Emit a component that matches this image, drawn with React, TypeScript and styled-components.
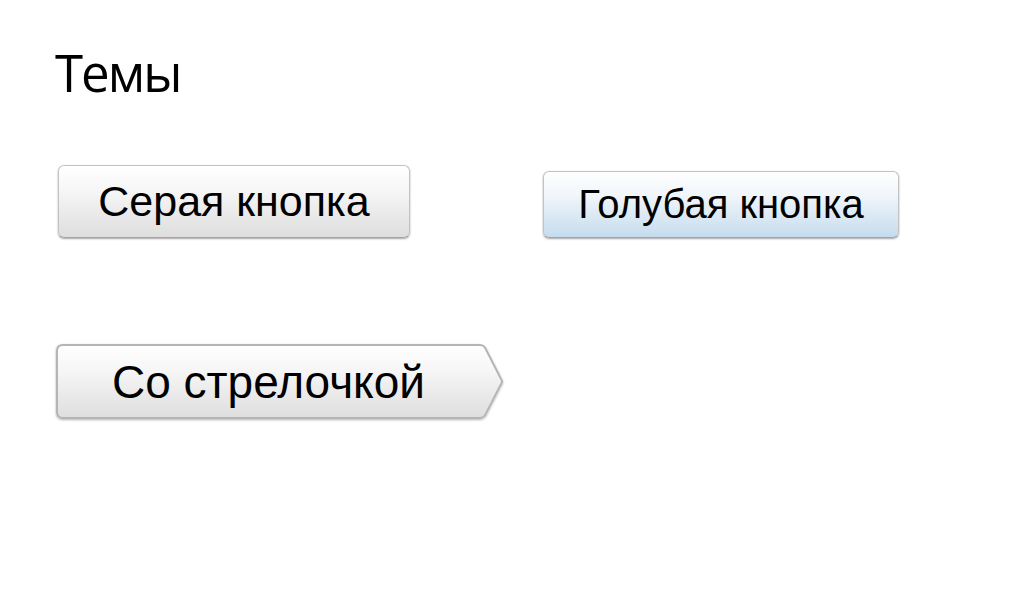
import React from "react";
import styled, { createGlobalStyle } from "styled-components";

const GlobalStyle = createGlobalStyle`
  html, body {
    margin: 0;
    padding: 0;
    background: #ffffff;
  }
`;

const Page = styled.div`
  width: 1024px;
  height: 603px;
  box-sizing: border-box;
  padding: 47px 0 0 55px;
  display: flex;
  flex-direction: column;
  align-items: flex-start;
`;

const Title = styled.h1`
  margin: 0;
  font-family: "Open Sans", "Noto Sans", sans-serif;
  font-weight: 400;
  font-size: 51px;
  letter-spacing: -2px;
  line-height: 1;
  color: #000;
`;

const Row = styled.div`
  margin-top: 67px;
  padding-left: 3px;
  display: flex;
  align-items: flex-end;
  gap: 133px;
`;

const Button = styled.button<{ $tone: "gray" | "blue"; $w: number; $h: number; $size: number }>`
  width: ${(p) => p.$w}px;
  height: ${(p) => p.$h}px;
  box-sizing: border-box;
  padding: 0;
  border: 1px solid #c2c2c2;
  border-bottom-color: #a4a4a4;
  border-radius: 6px;
  background: ${(p) =>
    p.$tone === "gray"
      ? "linear-gradient(180deg, #ffffff 0%, #f6f6f6 35%, #dedede 100%)"
      : "linear-gradient(180deg, #ffffff 0%, #f1f6fa 35%, #c5dcee 100%)"};
  box-shadow: 0 1px 2px rgba(0, 0, 0, 0.35);
  font-family: "Liberation Sans", Arial, sans-serif;
  font-size: ${(p) => p.$size}px;
  color: #000;
  display: flex;
  align-items: center;
  justify-content: center;
  cursor: pointer;
`;

const ArrowButton = styled.button`
  margin-top: 106px;
  margin-left: 1px;
  position: relative;
  width: 447px;
  height: 75px;
  padding: 0 22px 0 0;
  border: none;
  background: transparent;
  font-family: "Liberation Sans", Arial, sans-serif;
  font-size: 46px;
  color: #000;
  display: flex;
  align-items: center;
  justify-content: center;
  cursor: pointer;
`;

const ArrowShape = styled.svg`
  position: absolute;
  inset: 0;
  overflow: visible;
`;

const ArrowLabel = styled.span`
  position: relative;
`;

const App: React.FC = () => {
  return (
    <>
      <GlobalStyle />
      <Page>
        <Title>Темы</Title>
        <Row>
          <Button $tone="gray" $w={352} $h={73} $size={43}>
            Серая кнопка
          </Button>
          <Button $tone="blue" $w={356} $h={67} $size={40}>
            Голубая кнопка
          </Button>
        </Row>
        <ArrowButton>
          <ArrowShape width="447" height="75" viewBox="0 0 447 75">
            <defs>
              <linearGradient id="arrowFill" x1="0" y1="0" x2="0" y2="1">
                <stop offset="0" stopColor="#ffffff" />
                <stop offset="0.35" stopColor="#f6f6f6" />
                <stop offset="1" stopColor="#dedede" />
              </linearGradient>
              <filter id="arrowShadow" x="-5%" y="-10%" width="110%" height="125%">
                <feDropShadow dx="0" dy="1" stdDeviation="1" floodColor="#000" floodOpacity="0.3" />
              </filter>
            </defs>
            <path
              d="M7 1 H424 Q427 1 429 3.5 L445 35 Q447 37.5 445 40 L429 71.5 Q427 74 424 74 H7 Q1 74 1 68 V7 Q1 1 7 1 Z"
              fill="url(#arrowFill)"
              stroke="#b5b5b5"
              strokeWidth="2"
              filter="url(#arrowShadow)"
            />
          </ArrowShape>
          <ArrowLabel>Со стрелочкой</ArrowLabel>
        </ArrowButton>
      </Page>
    </>
  );
};

export default App;
